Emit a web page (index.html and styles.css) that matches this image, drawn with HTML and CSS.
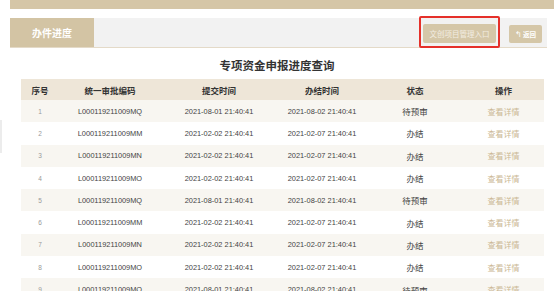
FILE: index.html
```html
<!DOCTYPE html>
<html lang="zh-CN">
<head>
<meta charset="utf-8">
<link rel="stylesheet" href="styles.css">
</head>
<body>
<div class="edge"></div>
<div class="topbar"></div>
<div class="navbar">
  <div class="tab">办件进度</div>
  <div class="spacer"></div>
  <div class="entry-wrap"><button class="entry">文创项目管理入口</button></div>
  <button class="back"><span class="arrow">↰</span>返回</button>
</div>
<h1 class="title">专项资金申报进度查询</h1>
<table class="grid">
  <colgroup>
    <col class="c1"><col class="c2"><col class="c3"><col class="c4"><col class="c5"><col class="c6">
  </colgroup>
  <thead>
    <tr><th>序号</th><th>统一审批编码</th><th>提交时间</th><th>办结时间</th><th>状态</th><th>操作</th></tr>
  </thead>
  <tbody>
    <tr><td class="idx">1</td><td>L000119211009MQ</td><td>2021-08-01 21:40:41</td><td>2021-08-02 21:40:41</td><td class="st">待预审</td><td class="op">查看详情</td></tr>
    <tr><td class="idx">2</td><td>L000119211009MM</td><td>2021-02-02 21:40:41</td><td>2021-02-07 21:40:41</td><td class="st">办结</td><td class="op">查看详情</td></tr>
    <tr><td class="idx">3</td><td>L000119211009MN</td><td>2021-02-02 21:40:41</td><td>2021-02-07 21:40:41</td><td class="st">办结</td><td class="op">查看详情</td></tr>
    <tr><td class="idx">4</td><td>L000119211009MO</td><td>2021-02-02 21:40:41</td><td>2021-02-07 21:40:41</td><td class="st">办结</td><td class="op">查看详情</td></tr>
    <tr><td class="idx">5</td><td>L000119211009MQ</td><td>2021-08-01 21:40:41</td><td>2021-08-02 21:40:41</td><td class="st">待预审</td><td class="op">查看详情</td></tr>
    <tr><td class="idx">6</td><td>L000119211009MM</td><td>2021-02-02 21:40:41</td><td>2021-02-07 21:40:41</td><td class="st">办结</td><td class="op">查看详情</td></tr>
    <tr><td class="idx">7</td><td>L000119211009MN</td><td>2021-02-02 21:40:41</td><td>2021-02-07 21:40:41</td><td class="st">办结</td><td class="op">查看详情</td></tr>
    <tr><td class="idx">8</td><td>L000119211009MO</td><td>2021-02-02 21:40:41</td><td>2021-02-07 21:40:41</td><td class="st">办结</td><td class="op">查看详情</td></tr>
    <tr><td class="idx">9</td><td>L000119211009MQ</td><td>2021-08-01 21:40:41</td><td>2021-08-02 21:40:41</td><td class="st">待预审</td><td class="op">查看详情</td></tr>
  </tbody>
</table>
</body>
</html>
```
FILE: styles.css
```css
html {
  margin: 0;
  padding: 0;
  background: #ffffff;
}
body {
  margin: 0;
  padding: 0;
  height: 291px;
  overflow: hidden;
  font-family: "Liberation Sans", Arial, "Noto Sans CJK SC", sans-serif;
  color: #333333;
  position: relative;
}
.edge {
  position: absolute;
  left: 0;
  top: 120px;
  width: 2px;
  height: 33px;
  background: #ececec;
}
.topbar {
  margin-left: 10px;
  height: 9px;
  background: #d5c6a7;
}
.navbar {
  display: flex;
  align-items: flex-start;
  margin: 9px 7px 0 10px;
  height: 29px;
  background: #f2f2f2;
  border-bottom: 1px solid #e4dac8;
  box-sizing: content-box;
}
.tab {
  width: 84px;
  height: 29px;
  background: #d3c4a4;
  color: #ffffff;
  font-size: 10px;
  font-weight: bold;
  display: flex;
  align-items: center;
  justify-content: center;
}
.spacer {
  flex: 1;
}
.entry-wrap {
  position: relative;
  margin-top: 6px;
  margin-right: 13px;
}
.entry-wrap::after {
  content: "";
  position: absolute;
  left: -4px;
  right: -4px;
  top: -8px;
  bottom: -5px;
  border: 2px solid #e5302a;
  border-radius: 2px;
  box-sizing: border-box;
}
.entry {
  display: block;
  width: 73px;
  height: 19px;
  border: none;
  border-radius: 2px;
  background: #d5c7a8;
  color: #f3ede2;
  font-family: inherit;
  font-size: 7.5px;
  padding: 0;
}
.back {
  margin-top: 7px;
  margin-right: 5px;
  width: 33px;
  height: 18px;
  border: none;
  border-radius: 2px;
  background: #d5c7a8;
  color: #ffffff;
  font-family: inherit;
  font-size: 6.5px;
  font-weight: bold;
  padding: 0;
}
.arrow {
  font-size: 8px;
  font-weight: normal;
  margin-right: 1px;
}
.title {
  margin: 8px 0 3px;
  text-align: center;
  font-size: 11.5px;
  line-height: 20px;
  font-weight: bold;
  color: #333333;
}
.grid {
  margin-left: 21px;
  width: 523px;
  border-collapse: collapse;
  table-layout: fixed;
}
.c1 { width: 38px; }
.c2 { width: 102px; }
.c3 { width: 116px; }
.c4 { width: 90px; }
.c5 { width: 96px; }
.c6 { width: 81px; }
.grid th {
  height: 21px;
  padding: 0;
  background: #eee6d8;
  font-size: 8.5px;
  font-weight: bold;
  color: #333333;
  text-align: center;
}
.grid td {
  height: 22.3px;
  padding: 0;
  font-size: 7.4px;
  color: #444444;
  text-align: center;
  white-space: nowrap;
}
.grid tbody tr:nth-child(odd) td {
  background: #f8f6f1;
}
.grid td.idx {
  font-size: 6.5px;
  color: #999999;
}
.grid td.st {
  font-size: 8.5px;
  color: #444444;
}
.grid td.op {
  font-size: 8px;
  color: #cbb894;
}
```
